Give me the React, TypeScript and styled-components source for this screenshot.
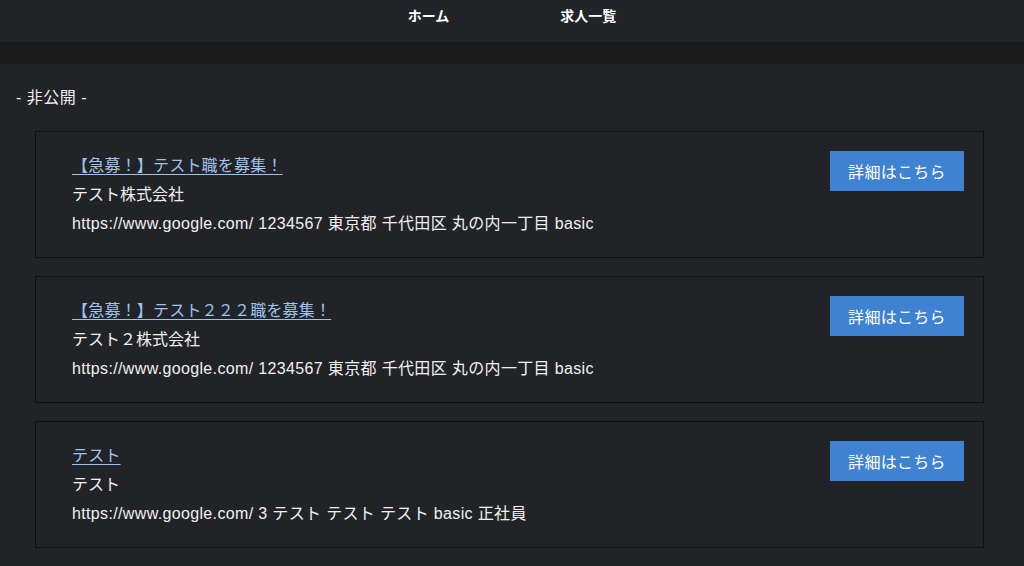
import React from "react";
import styled, { createGlobalStyle } from "styled-components";

type Job = {
  title: string;
  company: string;
  detail: string;
};

const jobs: Job[] = [
  {
    title: "【急募！】テスト職を募集！",
    company: "テスト株式会社",
    detail: "https://www.google.com/ 1234567 東京都 千代田区 丸の内一丁目 basic",
  },
  {
    title: "【急募！】テスト２２２職を募集！",
    company: "テスト２株式会社",
    detail: "https://www.google.com/ 1234567 東京都 千代田区 丸の内一丁目 basic",
  },
  {
    title: "テスト",
    company: "テスト",
    detail: "https://www.google.com/ 3 テスト テスト テスト basic 正社員",
  },
];

const GlobalStyle = createGlobalStyle`
  html, body {
    margin: 0;
    padding: 0;
    background: #222327;
  }
  body {
    font-family: "Liberation Sans", "Noto Sans CJK JP", sans-serif;
    color: #f2f2f2;
  }
`;

const Header = styled.header`
  height: 42px;
  background: #232428;
  display: flex;
  justify-content: center;
  align-items: flex-start;
  gap: 111px;
  padding-top: 7px;
  box-sizing: border-box;
`;

const NavLink = styled.a`
  color: #ffffff;
  font-size: 14px;
  font-weight: 700;
  line-height: 18px;
  text-decoration: none;
`;

const Band = styled.div`
  height: 22px;
  background: #1c1b1c;
`;

const Main = styled.main`
  padding: 24px 40px 20px 0;
`;

const SectionLabel = styled.div`
  font-size: 16px;
  line-height: 20px;
  letter-spacing: 0.5px;
  padding-left: 16px;
  margin-bottom: 23px;
  color: #f0f0f0;
`;

const List = styled.div`
  display: flex;
  flex-direction: column;
  gap: 18px;
  margin-left: 35px;
`;

const Card = styled.div`
  border: 1px solid #0f0f10;
  padding: 19px 19px 19px 36px;
  display: flex;
  justify-content: space-between;
  align-items: flex-start;
`;

const Info = styled.div`
  display: flex;
  flex-direction: column;
  font-size: 16px;
  line-height: 29px;
`;

const Title = styled.a`
  color: #9ec3ec;
  text-decoration: underline;
  text-underline-offset: 3px;
  letter-spacing: 0.2px;
  cursor: pointer;
  align-self: flex-start;
`;

const Line = styled.div`
  color: #f0f0f0;
`;

const Detail = styled(Line)`
  letter-spacing: 0.35px;
`;

const DetailButton = styled.button`
  width: 134px;
  height: 40px;
  border: none;
  background: #3f82d2;
  color: #ffffff;
  font-family: inherit;
  font-size: 16px;
  letter-spacing: 0.3px;
  cursor: pointer;
`;

export default function App() {
  return (
    <>
      <GlobalStyle />
      <Header>
        <NavLink>ホーム</NavLink>
        <NavLink>求人一覧</NavLink>
      </Header>
      <Band />
      <Main>
        <SectionLabel>- 非公開 -</SectionLabel>
        <List>
          {jobs.map((job, i) => (
            <Card key={i}>
              <Info>
                <Title>{job.title}</Title>
                <Line>{job.company}</Line>
                <Detail>{job.detail}</Detail>
              </Info>
              <DetailButton>詳細はこちら</DetailButton>
            </Card>
          ))}
        </List>
      </Main>
    </>
  );
}
